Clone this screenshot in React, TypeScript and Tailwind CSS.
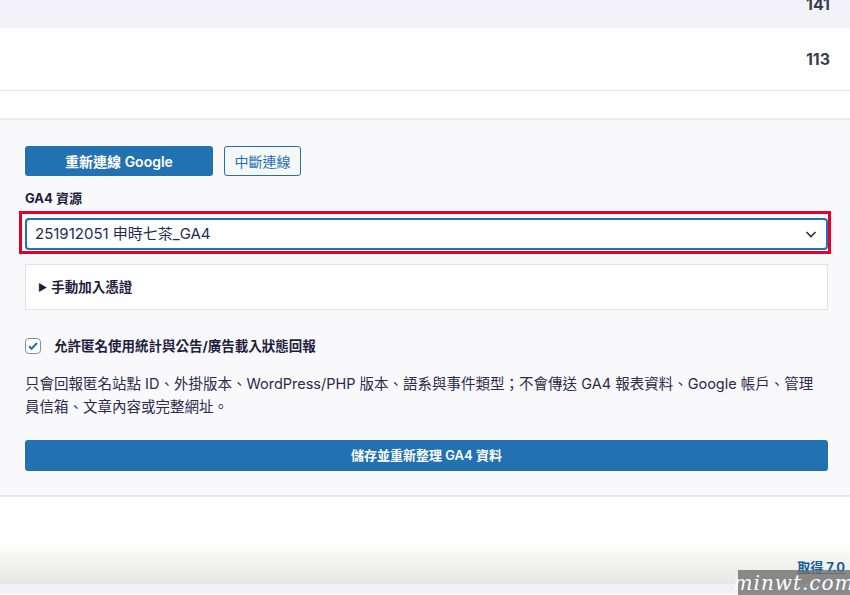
import React from 'react';

const font = { fontFamily: 'Inter, "Noto Sans CJK TC", sans-serif' };

export default function App() {
    return (
        <div className="w-[850px] h-[595px] overflow-hidden bg-white relative" style={font}>
            {/* stats rows */}
            <div className="h-[28px] bg-[#f3f2f8] flex items-end justify-end pr-[20px] overflow-hidden">
                <span className="text-[16px] font-bold text-[#3a3f4b] leading-none mb-[16px]">141</span>
            </div>
            <div className="h-[63px] bg-white flex items-center justify-end pr-[20px] border-b border-[#e4e4ea]">
                <span className="text-[16px] font-bold text-[#3a3f4b]">113</span>
            </div>
            <div className="h-[29px] bg-white border-b-2 border-[#e9e9ee]" />

            {/* settings panel */}
            <div className="bg-[#f9f9fb] pl-[25px] pr-[22px] pt-[26px] pb-[24px] border-b-2 border-[#e6e6ec]">
                <div className="flex gap-[11px]">
                    <button className="w-[188px] h-[30px] rounded-[3px] bg-[#2271b1] text-white text-[14px] font-semibold">重新連線 Google</button>
                    <button className="w-[77px] h-[30px] rounded-[3px] border border-[#2271b1] bg-[#f6f7f7] text-[#2271b1] text-[14px]">中斷連線</button>
                </div>

                <div className="mt-[13px] text-[13px] leading-[18px] font-bold text-[#1f1d3d]">GA4 資源</div>

                <div className="mt-[4px] -ml-[6px] -mr-[3px] border-[3px] border-[#e4002b] pt-[4px] pb-[1px] pl-[3px] pr-0">
                    <div className="h-[32px] rounded-[4px] border-2 border-[#2271b1] bg-white flex items-center justify-between pl-[8px] pr-[8px]">
                        <span className="text-[15px] text-[#1d2c52]">251912051 申時七茶_GA4</span>
                        <svg width="14" height="14" viewBox="0 0 14 14" fill="none">
                            <path d="M2.5 5l4.5 4.5L11.5 5" stroke="#2c3338" strokeWidth="1.6" />
                        </svg>
                    </div>
                </div>

                <div className="mt-[10px] h-[46px] bg-white border border-[#e2e2e6] flex items-center pl-[12px] gap-[4px]">
                    <span className="text-[10px] text-[#1f1d3d]">▶</span>
                    <span className="text-[13.5px] font-bold text-[#1f1d3d]">手動加入憑證</span>
                </div>

                <label className="mt-[26px] h-[20px] flex items-center gap-[13px]">
                    <span className="w-[16px] h-[16px] rounded-[4px] border border-[#8c8f94] bg-white flex items-center justify-center">
                        <svg width="12" height="12" viewBox="0 0 12 12" fill="none">
                            <path d="M2 6.2l2.6 2.6L10 3" stroke="#2271b1" strokeWidth="2" />
                        </svg>
                    </span>
                    <span className="text-[13.5px] font-bold text-[#1f1d3d]">允許匿名使用統計與公告/廣告載入狀態回報</span>
                </label>

                <p className="mt-[16px] text-[14.5px] leading-[23px] text-[#2a2a4a] max-w-[795px]">
                    只會回報匿名站點 ID、外掛版本、WordPress/PHP 版本、語系與事件類型；不會傳送 GA4 報表資料、Google 帳戶、管理員信箱、文章內容或完整網址。
                </p>

                <button className="mt-[22px] w-full h-[31px] rounded-[3px] bg-[#2271b1] text-white text-[13px] font-semibold">儲存並重新整理 GA4 資料</button>
            </div>

            {/* bottom area */}
            <div className="h-[87px] bg-gradient-to-b from-white from-50% to-[#e6e6e4] relative">
                <a className="absolute right-[5px] bottom-[7px] text-[13px] font-bold text-[#135e96] underline">取得 7.0</a>
            </div>
            <div className="h-[10px] bg-[#eef2f8]" />

            {/* watermark */}
            <div className="absolute right-0 bottom-0 w-[112px] h-[25px] bg-[#6f6f6f]/80 flex items-center justify-center">
                <span className="text-white text-[20px] italic tracking-[1px] leading-none" style={{ fontFamily: '"DejaVu Serif", serif' }}>minwt.com</span>
            </div>
        </div>
    );
}
